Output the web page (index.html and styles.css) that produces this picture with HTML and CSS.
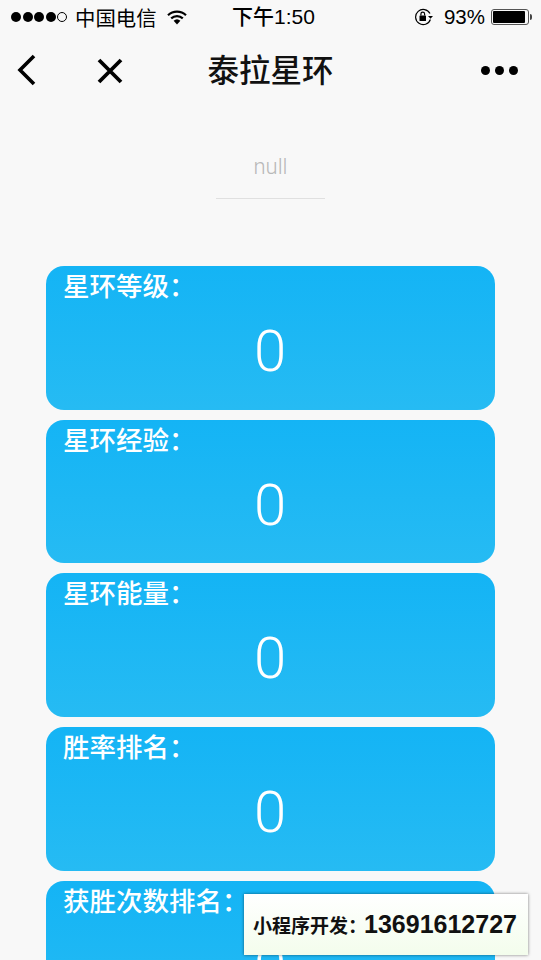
FILE: index.html
```html
<!DOCTYPE html>
<html lang="zh-CN">
<head>
    <meta charset="UTF-8">
    <meta name="viewport" content="width=device-width, initial-scale=1.0">
    <title>泰拉星环</title>
    <link rel="stylesheet" href="styles.css">
</head>
<body>
    <div class="page">
        <div class="status-bar">
            <div class="status-left">
                <div class="signal">
                    <span class="dot"></span>
                    <span class="dot"></span>
                    <span class="dot"></span>
                    <span class="dot"></span>
                    <span class="dot empty"></span>
                </div>
                <span class="carrier">中国电信</span>
                <svg class="wifi" width="20" height="15" viewBox="0 0 20 15">
                    <path d="M1 5.2a13 13 0 0 1 18 0" fill="none" stroke="#000" stroke-width="2.200"/>
                    <path d="M4.2 8.4a8.4 8.4 0 0 1 11.6 0" fill="none" stroke="#000" stroke-width="2.200"/>
                    <path d="M6.600 10.800a5 5 0 0 1 6.800 0L10 14.600z" fill="#000"/>
                </svg>
            </div>
            <div class="clock">下午1:50</div>
            <div class="status-right">
                <svg class="lock" width="20" height="18" viewBox="0 0 20 18">
                    <path d="M16.400 11.500A7.600 7.600 0 1 1 16 5.600" fill="none" stroke="#000" stroke-width="1.200"/>
                    <path d="M14 8h5l-2.500 2.800z" fill="#000"/>
                    <rect x="5.500" y="7.500" width="6.500" height="5.500" rx="0.600" fill="#000"/>
                    <path d="M6.900 7.500V6a1.850 1.850 0 0 1 3.700 0v1.500" fill="none" stroke="#000" stroke-width="1.200"/>
                </svg>
                <span class="percent">93%</span>
                <div class="battery">
                    <div class="battery-level"></div>
                </div>
                <div class="battery-cap"></div>
            </div>
        </div>

        <div class="nav-bar">
            <svg class="nav-back" width="20" height="32" viewBox="0 0 20 32">
                <path d="M17 2L3 16l14 14" fill="none" stroke="#000" stroke-width="3.600"/>
            </svg>
            <svg class="nav-close" width="26" height="26" viewBox="0 0 26 26">
                <path d="M2 2l22 22M24 2L2 24" fill="none" stroke="#000" stroke-width="3.800"/>
            </svg>
            <div class="nav-title">泰拉星环</div>
            <div class="nav-more">
                <span></span>
                <span></span>
                <span></span>
            </div>
        </div>

        <div class="name-box">
            <div class="name">null</div>
        </div>

        <div class="cards">
            <div class="card">
                <div class="card-label">星环等级：</div>
                <div class="card-value">0</div>
            </div>
            <div class="card">
                <div class="card-label">星环经验：</div>
                <div class="card-value">0</div>
            </div>
            <div class="card">
                <div class="card-label">星环能量：</div>
                <div class="card-value">0</div>
            </div>
            <div class="card">
                <div class="card-label">胜率排名：</div>
                <div class="card-value">0</div>
            </div>
            <div class="card">
                <div class="card-label">获胜次数排名：</div>
                <div class="card-value">0</div>
            </div>
        </div>

        <div class="dev-badge">
            <span class="dev-label">小程序开发：</span>
            <span class="dev-phone">13691612727</span>
        </div>
    </div>
</body>
</html>
```

FILE: styles.css
```css
html, body {
    margin: 0;
    padding: 0;
}
body {
    background: #f8f8f8;
    font-family: "Liberation Sans", "Noto Sans CJK SC", sans-serif;
}
.page {
    position: relative;
    width: 541px;
    height: 960px;
    overflow: hidden;
}

/* status bar */
.status-bar {
    height: 34px;
    padding: 0 9px 0 11px;
    display: flex;
    justify-content: space-between;
    align-items: center;
    position: relative;
    color: #000;
    font-size: 20px;
}
.status-left, .status-right {
    display: flex;
    align-items: center;
}
.signal {
    display: flex;
    gap: 1.500px;
}
.dot {
    width: 10px;
    height: 10px;
    border-radius: 50%;
    background: #000;
    box-sizing: border-box;
}
.dot.empty {
    background: none;
    border: 1px solid #000;
}
.carrier {
    margin-left: 8px;
    font-size: 20.400px;
}
.wifi {
    margin-left: 10px;
}
.clock {
    position: absolute;
    left: 232px;
    top: 4px;
    font-size: 21px;
    line-height: 26px;
    font-weight: 500;
}
.lock {
    margin-right: 10px;
}
.percent {
    font-size: 20.500px;
    margin-right: 6px;
}
.battery {
    width: 38px;
    height: 16px;
    border: 1px solid #555;
    border-radius: 3px;
    padding: 1px;
    box-sizing: border-box;
}
.battery-level {
    width: 93%;
    height: 100%;
    background: #000;
    border-radius: 1px;
}
.battery-cap {
    width: 2px;
    height: 6px;
    margin-left: 1px;
    background: #444;
    border-radius: 0 2px 2px 0;
}

/* nav bar */
.nav-bar {
    height: 66px;
    position: relative;
    display: flex;
    align-items: center;
    justify-content: center;
}
.nav-back {
    position: absolute;
    left: 17px;
    top: 20px;
}
.nav-close {
    position: absolute;
    left: 97px;
    top: 24px;
}
.nav-title {
    font-size: 31.500px;
    font-weight: 500;
    color: #111;
    margin-top: 2px;
}
.nav-more {
    position: absolute;
    right: 23px;
    top: 32px;
    display: flex;
    gap: 5px;
}
.nav-more span {
    width: 9px;
    height: 9px;
    border-radius: 50%;
    background: #000;
}

/* name */
.name-box {
    width: 109px;
    height: 99px;
    margin: 0 auto;
    box-sizing: border-box;
    border-bottom: 1px solid #e0e0e0;
    text-align: center;
}
.name {
    padding-top: 53px;
    font-family: Roboto, sans-serif;
    font-weight: 300;
    font-size: 22px;
    line-height: 28px;
    color: #b8b8b8;
}

/* cards */
.cards {
    margin: 67px 46px 0;
    display: flex;
    flex-direction: column;
    gap: 10.100px;
}
.card {
    height: 143.600px;
    flex-shrink: 0;
    border-radius: 18px;
    background: linear-gradient(to bottom, #14b4f5, #26bbf3);
    color: #fff;
    position: relative;
}
.card-label {
    padding: 3px 0 0 17px;
    font-size: 26.500px;
    font-weight: 500;
    line-height: 36px;
}
.card-value {
    text-align: center;
    font-family: Roboto, sans-serif;
    font-weight: 300;
    font-size: 58px;
    line-height: 68px;
    margin-top: 12px;
    padding-right: 1px;
}

/* overlay */
.dev-badge {
    position: absolute;
    left: 244px;
    top: 894px;
    width: 284px;
    height: 61px;
    box-sizing: border-box;
    padding-left: 9px;
    display: flex;
    align-items: center;
    background: linear-gradient(to bottom, #ffffff, #f3fdec);
    box-shadow: 0 0 3px rgba(0, 0, 0, 0.5);
    color: #111;
    font-weight: bold;
}
.dev-label {
    font-size: 19px;
}
.dev-phone {
    font-size: 25px;
    margin-left: -3px;
}
```
